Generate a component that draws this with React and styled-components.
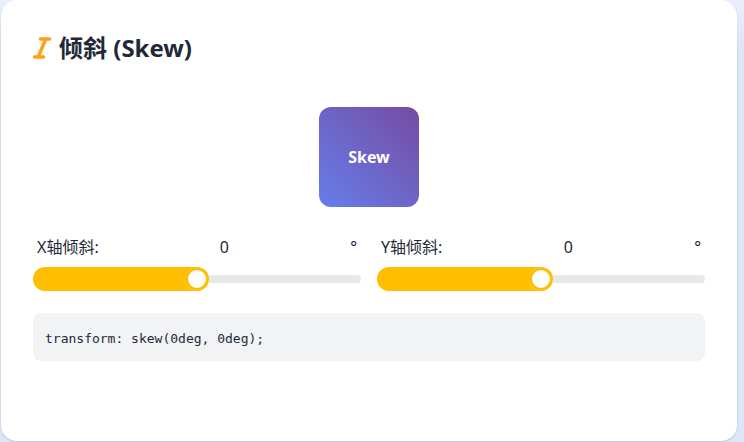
import React, { useState } from "react";
import styled, { createGlobalStyle } from "styled-components";
import { FaItalic } from "react-icons/fa6";

function SkewSlider({ id, label, value, onChange }) {
  return (
    <Field>
      <LabelRow>
        <label htmlFor={id}>{label}</label>
        <output htmlFor={id}>{value}</output>
        <span>°</span>
      </LabelRow>
      <Range
        id={id}
        type="range"
        min="-45"
        max="45"
        value={value}
        onChange={(e) => onChange(Number(e.target.value))}
      />
    </Field>
  );
}

function App() {
  const [x, setX] = useState(0);
  const [y, setY] = useState(0);

  return (
    <>
      <GlobalStyle />
      <Page>
        <Card>
          <Title>
            <TitleIcon aria-hidden="true" />
            倾斜 (Skew)
          </Title>
          <Preview>
            <Box style={{ transform: `skew(${x}deg, ${y}deg)` }}>Skew</Box>
          </Preview>
          <Controls>
            <SkewSlider id="skew-x" label="X轴倾斜:" value={x} onChange={setX} />
            <SkewSlider id="skew-y" label="Y轴倾斜:" value={y} onChange={setY} />
          </Controls>
          <Code>{`transform: skew(${x}deg, ${y}deg);`}</Code>
        </Card>
      </Page>
    </>
  );
}

const GlobalStyle = createGlobalStyle`
  * {
    box-sizing: border-box;
  }

  body {
    margin: 0;
    background: #e0e6f8;
    color: #1f2937;
    font-family: "Noto Sans", "Noto Sans CJK SC", sans-serif;
    font-size: 16px;
    line-height: 24px;
  }
`;

const Page = styled.main`
  padding: 0 7px 1px 1px;
  background: linear-gradient(#e9effc, #dfe5f8 48px);
`;

const Card = styled.section`
  padding: 32px 32px 80px;
  border-radius: 16px;
  background: #fff;
  box-shadow: 0 1px 2px rgba(30, 60, 110, 0.2);
`;

const Title = styled.h2`
  display: flex;
  align-items: center;
  gap: 8px;
  margin: 0;
  font-size: 24px;
  font-weight: 700;
  line-height: 32px;
`;

const TitleIcon = styled(FaItalic)`
  width: 18px;
  height: 24px;
  color: #ff9f1a;
  stroke: currentColor;
  stroke-width: 12px;
  overflow: visible;
`;

const Preview = styled.div`
  display: flex;
  justify-content: center;
  padding: 43px 0 28px;
`;

const Box = styled.div`
  display: flex;
  align-items: center;
  justify-content: center;
  width: 100px;
  height: 100px;
  border-radius: 12px;
  background: linear-gradient(45deg, #667eea, #764ba2);
  color: #fff;
  font-weight: 700;
`;

const Controls = styled.div`
  display: grid;
  grid-template-columns: 1fr 1fr;
  gap: 16px;
`;

const Field = styled.div`
  display: flex;
  flex-direction: column;
  gap: 8px;
`;

const LabelRow = styled.div`
  display: flex;
  justify-content: space-between;
  padding: 0 4px;
`;

const Range = styled.input`
  appearance: none;
  width: 100%;
  height: 24px;
  margin: 0;
  border-radius: 12px;
  background: transparent;
  overflow: hidden;
  cursor: pointer;

  &::-webkit-slider-runnable-track {
    height: 8px;
    border-radius: 4px;
    background: #e7e8ea;
  }

  /* the shadow spreads to the left and paints the filled part */
  &::-webkit-slider-thumb {
    appearance: none;
    position: relative;
    top: 50%;
    width: 24px;
    height: 24px;
    border-radius: 12px;
    background: #fff;
    color: #ffbe00;
    transform: translateY(-50%);
    box-shadow:
      0 0 0 3px inset,
      -1610px 0 0 1600px;
  }
`;

const Code = styled.code`
  display: block;
  margin-top: 22px;
  padding: 14px 12px 10px;
  border-radius: 8px;
  background: #f2f3f5;
  font-family: "DejaVu Sans Mono", monospace;
  font-size: 13px;
  line-height: 24px;
`;

export default App;
